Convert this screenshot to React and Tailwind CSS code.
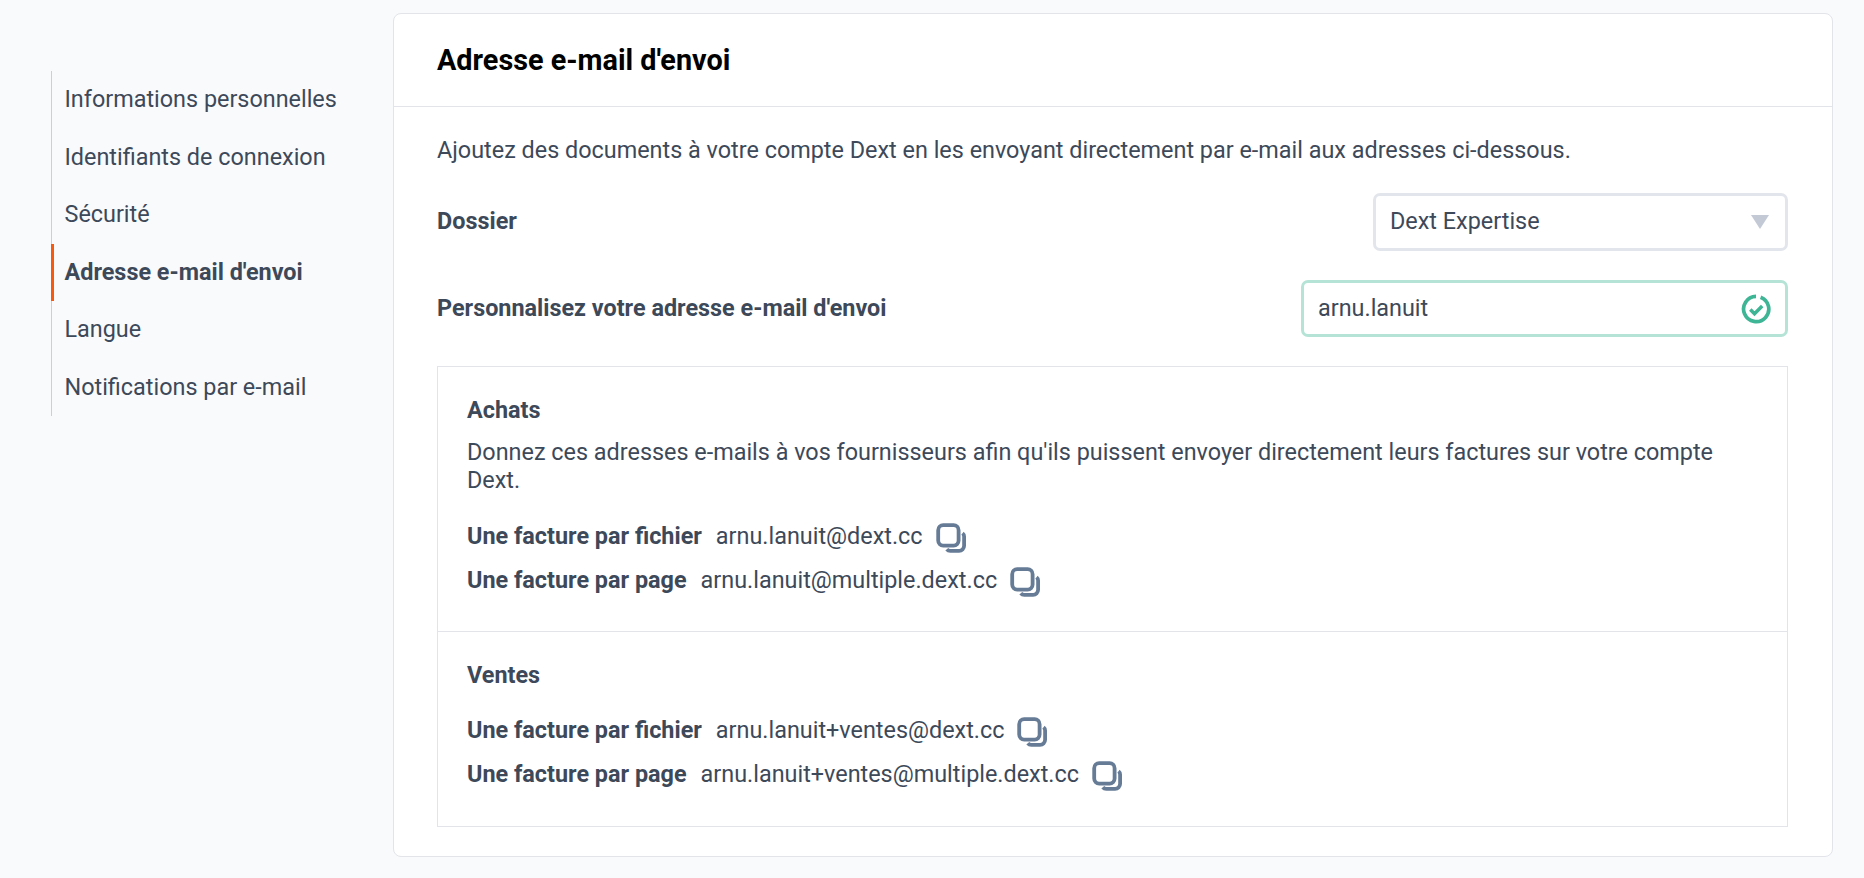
const font = { fontFamily: 'Roboto, sans-serif' };

function CopyIcon({ className }) {
    return (
        <svg className={className} width="30" height="30" viewBox="0 0 30 30" fill="none" stroke="#667b96" strokeWidth="3.8">
            <rect x="2.2" y="2.2" width="20.4" height="20.4" rx="5" />
            <path d="M26.5 10.2c1 .8 1.6 2 1.6 3.3v9.3a5 5 0 0 1-5 5h-8.8c-1.5 0-2.7-.6-3.5-1.6" />
        </svg>
    );
}

function CheckIcon() {
    return (
        <svg width="30" height="30" viewBox="0 0 30 30" fill="none" stroke="#3eb595" strokeWidth="3.7">
            <path d="M19.6 3.2A12.6 12.6 0 1 1 15 2.4" />
            <path d="M9.3 15.5l4.2 4.2 7.7-7.7" strokeWidth="3.5" />
        </svg>
    );
}

function EmailRow({ label, email }) {
    return (
        <div className="flex items-center h-[44px]">
            <span className="font-bold">{label}</span>
            <span className="ml-[14px]">{email}</span>
            <CopyIcon className="ml-[13px] mt-[2px]" />
        </div>
    );
}

const nav = [
    'Informations personnelles',
    'Identifiants de connexion',
    'Sécurité',
    "Adresse e-mail d'envoi",
    'Langue',
    'Notifications par e-mail',
];

export default function App() {
    return (
        <div className="flex h-[878px] bg-[#f9fafc] text-[#3d4959] text-[23.4px] overflow-hidden" style={font}>
            {/* Side menu */}
            <div className="w-[393px] shrink-0 pl-[51px] pt-[71px]">
                <ul className="border-l border-l-[#c9cfdb] w-[300px]">
                    {nav.map((item) => {
                        const active = item.startsWith('Adresse');
                        return (
                            <li
                                key={item}
                                className={`h-[57.5px] -ml-px flex items-center pl-[10.5px] border-l-[3px] whitespace-nowrap ${active ? 'border-l-[#f9590f] font-bold' : 'border-l-transparent'}`}
                            >
                                {item}
                            </li>
                        );
                    })}
                </ul>
            </div>

            {/* Card */}
            <div className="w-[1440px] h-[844px] mt-[13px] bg-white border border-[#e2e4ea] rounded-[8px]">
                <div className="h-[93px] flex items-center pl-[43px] pt-[1px] border-b border-[#e2e4ea] text-black font-bold text-[28.8px]">
                    Adresse e-mail d'envoi
                </div>
                <div className="pl-[43px] pr-[44px]">
                    <p className="h-[86px] pt-[2px] flex items-center">
                        Ajoutez des documents à votre compte Dext en les envoyant directement par e-mail aux adresses ci-dessous.
                    </p>
                    <div className="flex items-center justify-between h-[58px]">
                        <span className="font-bold">Dossier</span>
                        <div className="w-[415px] h-[58px] flex items-center justify-between pl-[14px] pr-[16px] border-[3px] border-[#e2e5eb] rounded-[7px]">
                            <span>Dext Expertise</span>
                            <span className="w-0 h-0 border-x-[9px] border-x-transparent border-t-[14px] border-t-[#c3cad6]"></span>
                        </div>
                    </div>
                    <div className="flex items-center justify-between h-[57px] mt-[29px]">
                        <span className="font-bold">Personnalisez votre adresse e-mail d'envoi</span>
                        <div className="w-[487px] h-[57px] flex items-center justify-between pl-[14px] pr-[14px] border-[3px] border-[#b5e3d6] rounded-[7px]">
                            <span>arnu.lanuit</span>
                            <CheckIcon />
                        </div>
                    </div>
                    <div className="mt-[29px] h-[461px] border border-[#e2e4ea]">
                        <div className="h-[265px] px-[29px] pt-[27px] border-b border-[#e2e4ea]">
                            <h3 className="font-bold leading-[32px]">Achats</h3>
                            <p className="leading-[27.5px] mt-[13px]">
                                Donnez ces adresses e-mails à vos fournisseurs afin qu'ils puissent envoyer directement leurs factures sur votre compte Dext.
                            </p>
                            <div className="mt-[21px]">
                                <EmailRow label="Une facture par fichier" email="arnu.lanuit@dext.cc" />
                                <EmailRow label="Une facture par page" email="arnu.lanuit@multiple.dext.cc" />
                            </div>
                        </div>
                        <div className="px-[29px] pt-[27px]">
                            <h3 className="font-bold leading-[32px]">Ventes</h3>
                            <div className="mt-[18px]">
                                <EmailRow label="Une facture par fichier" email="arnu.lanuit+ventes@dext.cc" />
                                <EmailRow label="Une facture par page" email="arnu.lanuit+ventes@multiple.dext.cc" />
                            </div>
                        </div>
                    </div>
                </div>
            </div>
        </div>
    );
}
